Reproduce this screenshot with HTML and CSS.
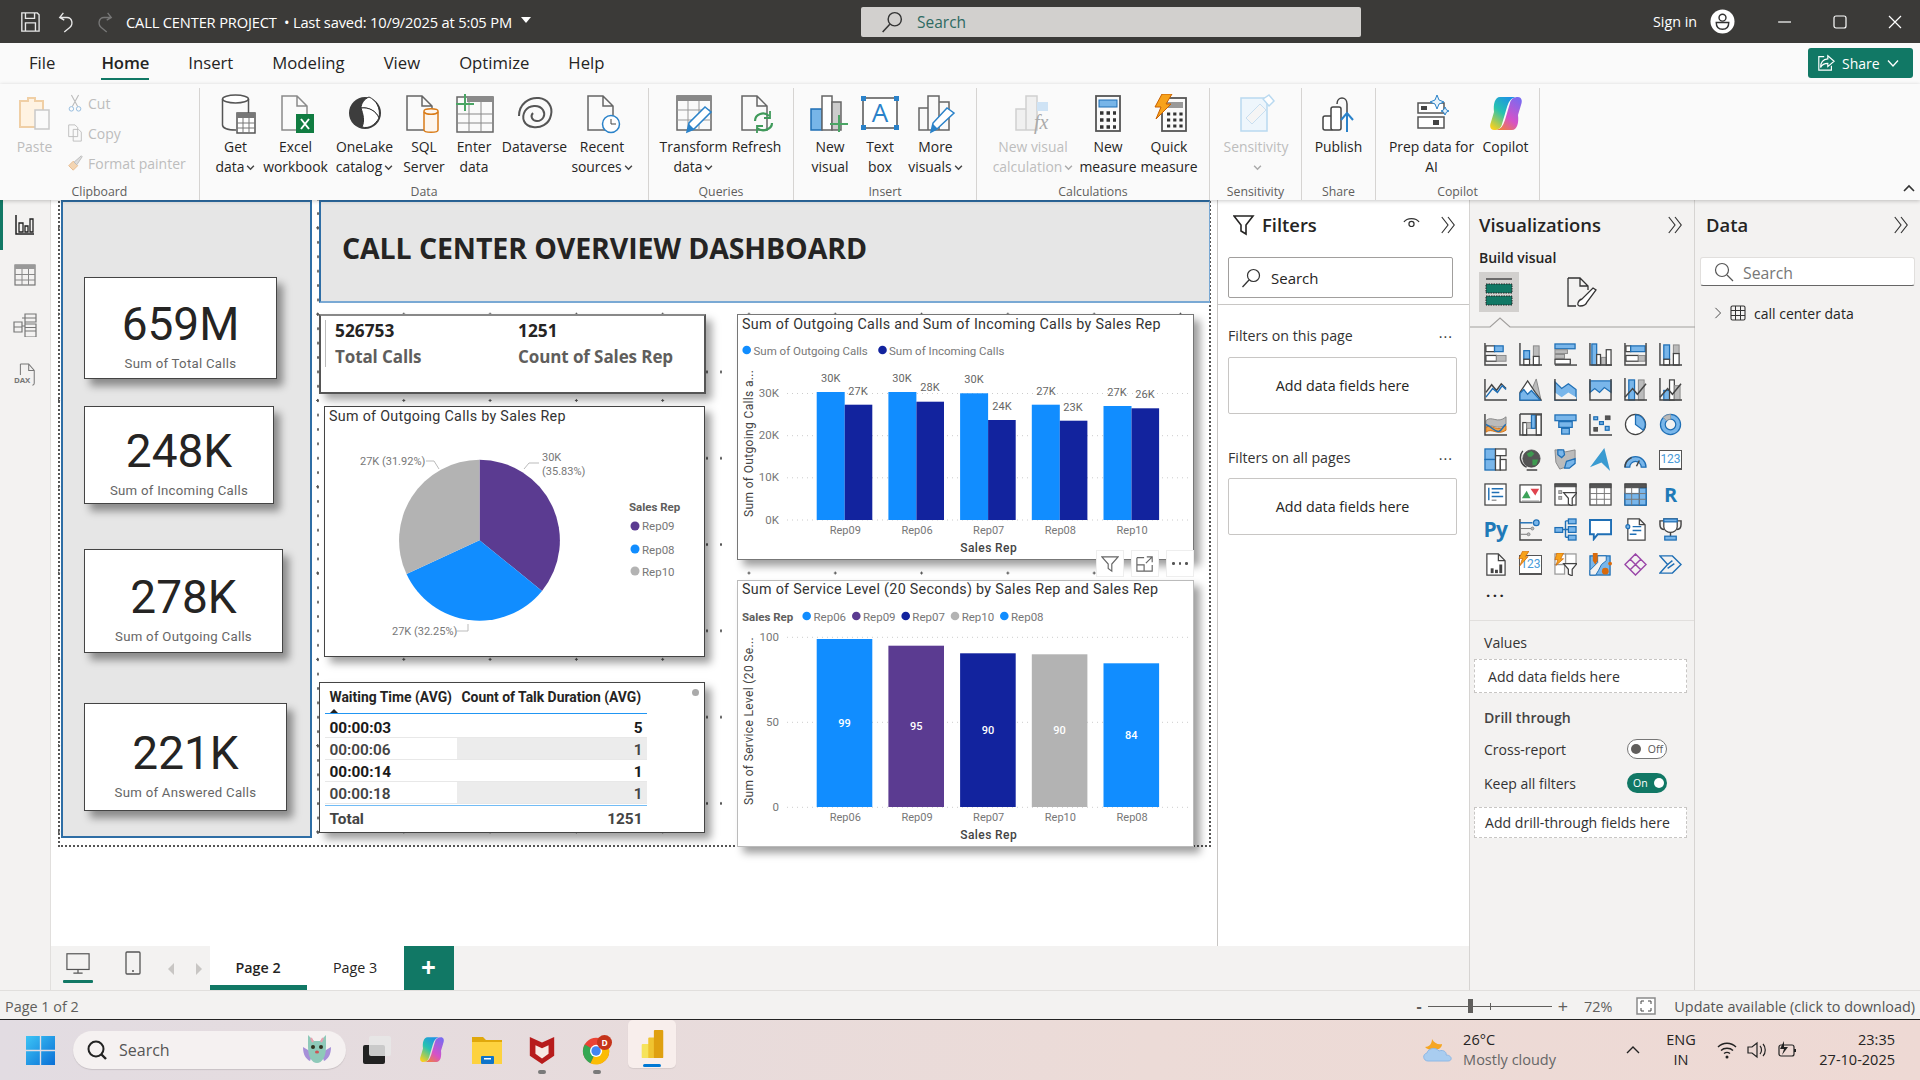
FILE: index.html
```html
<!DOCTYPE html>
<html lang="en">
<head>
<meta charset="utf-8">
<title>CALL CENTER PROJECT</title>
<link rel="stylesheet" href="styles.css">
</head>
<body>
<div class="app">
  <header class="titlebar">
    <div class="tb-left">
      <svg class="tb-ic" viewBox="0 0 22 24"><path d="M2 2H19L21 4V22H2Z M6 2V8H16V2 M6 22V13H17V22" fill="none" stroke="#e8e8e8" stroke-width="1.5"/></svg>
      <svg class="tb-ic" viewBox="0 0 22 24"><path d="M7 2L3 7L8 10M3 7H11C17 7 18 15 14 18L8 23" fill="none" stroke="#e8e8e8" stroke-width="1.5"/></svg>
      <svg class="tb-ic" viewBox="0 0 22 24"><path d="M15 2L19 7L14 10M19 7H11C5 7 4 15 8 18L14 23" fill="none" stroke="#777" stroke-width="1.5"/></svg>
      <span class="doc-title">CALL CENTER PROJECT&nbsp; •&nbsp;Last saved: 10/9/2025 at 5:05 PM</span>
      <span class="caret"></span>
    </div>
    <div class="tb-search">
      <svg class="ic22" viewBox="0 0 20 20"><circle cx="12.5" cy="7.5" r="6" fill="none" stroke="#333" stroke-width="1.3"/><path d="M8 12L1.5 19" stroke="#333" stroke-width="1.4"/></svg>
      <span>Search</span>
    </div>
    <div class="tb-right">
      <span class="signin">Sign in</span>
      <svg class="avatar" viewBox="0 0 26 26"><circle cx="13" cy="13" r="12.5" fill="#fff"/><circle cx="13" cy="9" r="3.6" fill="none" stroke="#333" stroke-width="1.5"/><path d="M6.5 14H19.5C19.5 19 16.5 21 13 21S6.5 19 6.5 14Z" fill="none" stroke="#333" stroke-width="1.5"/></svg>
      <div class="win-btns">
        <svg class="ic14" viewBox="0 0 14 14"><path d="M0 7H13" stroke="#fff" stroke-width="1.2"/></svg>
        <svg class="ic14" viewBox="0 0 14 14"><rect x="1" y="1" width="12" height="12" rx="2" fill="none" stroke="#fff" stroke-width="1.2"/></svg>
        <svg class="ic14" viewBox="0 0 14 14"><path d="M1 1L13 13M13 1L1 13" stroke="#fff" stroke-width="1.2"/></svg>
      </div>
    </div>
  </header>

  <nav class="tabs">
    <span class="tab tab-file">File</span>
    <span class="tab tab-on">Home</span>
    <span class="tab">Insert</span>
    <span class="tab">Modeling</span>
    <span class="tab">View</span>
    <span class="tab">Optimize</span>
    <span class="tab">Help</span>
    <button class="share">
      <svg class="ic18" viewBox="0 0 20 20"><path d="M12 2L19 8L12 14V10.5C8 10.5 5.5 12 4 15C4 9.5 7 6 12 5.5Z M8 3H2V18H16V13" fill="none" stroke="#fff" stroke-width="1.3"/></svg>
      <span>Share</span>
      <svg class="ic12" viewBox="0 0 12 12"><path d="M1 3.5L6 9L11 3.5" fill="none" stroke="#fff" stroke-width="1.3"/></svg>
    </button>
  </nav>

  <section class="ribbon">
    <div class="group g-clip">
      <div class="items">
        <div class="btn off">
          <svg class="ric" viewBox="0 0 40 40"><path d="M5 7H13V4H20V7H28V33H5Z" fill="#fff3e2" stroke="#f0cfa5" stroke-width="2"/><rect x="20" y="16" width="14" height="19" fill="#fafafa" stroke="#c9c9c9" stroke-width="1.5"/></svg>
          <span>Paste</span>
        </div>
        <div class="clip-stack off">
          <div class="mini"><svg class="ic18" viewBox="0 0 18 20"><path d="M5 1L12 14M13 1L6 14" stroke="#bbb" stroke-width="1.2"/><circle cx="5" cy="16.5" r="2.5" fill="none" stroke="#8fb8dc"/><circle cx="13" cy="16.5" r="2.5" fill="none" stroke="#8fb8dc"/></svg><span>Cut</span></div>
          <div class="mini"><svg class="ic18" viewBox="0 0 18 20"><path d="M2 1H9L12 4V14H2Z M7 6H13L16 9V19H7Z" fill="#fafafa" stroke="#bbb"/></svg><span>Copy</span></div>
          <div class="mini"><svg class="ic18" viewBox="0 0 18 20"><path d="M2 13L7 18L12 13L7 8Z" fill="#f3d5b3" stroke="#e6b98a"/><path d="M8 9L16 2L17 3L11 12Z" fill="#ddd" stroke="#bbb"/></svg><span>Format painter</span></div>
        </div>
      </div>
      <div class="g-label">Clipboard</div>
    </div>

    <div class="group g-data">
      <div class="items">
        <div class="btn">
          <svg class="ric" viewBox="0 0 40 40"><ellipse cx="19.5" cy="5" rx="13" ry="4" fill="#fff" stroke="#555" stroke-width="1.5"/><path d="M6.5 5V31C6.5 34 12 36 20 36M32.5 5V19" fill="none" stroke="#555" stroke-width="1.5"/><rect x="21" y="19" width="18" height="20" fill="#fff" stroke="#555" stroke-width="1.5"/><rect x="21" y="19" width="18" height="5" fill="#777"/><path d="M27 24V39M33 24V39M21 29H39M21 34H39" stroke="#777"/></svg>
          <span>Get<br>data<svg class="chev" viewBox="0 0 8 8"><path d="M1 2.5L4 5.5L7 2.5" fill="none" stroke="#444" stroke-width="1.3"/></svg></span>
        </div>
        <div class="btn">
          <svg class="ric" viewBox="0 0 40 40"><path d="M6 2H21L31 12V36H6Z M21 2V12H31" fill="#fafafa" stroke="#8a8a8a" stroke-width="1.5"/><rect x="20" y="20" width="18" height="19" fill="#107c41"/><path d="M25 25L33 35M33 25L25 35" stroke="#fff" stroke-width="2"/></svg>
          <span>Excel<br>workbook</span>
        </div>
        <div class="btn">
          <svg class="ric" viewBox="0 0 40 40"><circle cx="20" cy="19" r="16" fill="#3d3d3d"/><path d="M24 3C31 6 36 14 34 24C31 17 24 13 16 14C16 10 19 5 24 3Z" fill="#fff" stroke="#333"/><path d="M34 24C30 31 24 35 17 33C20 27 18 20 16 14C24 13 31 17 34 24Z" fill="#fff" stroke="#333"/></svg>
          <span>OneLake<br>catalog<svg class="chev" viewBox="0 0 8 8"><path d="M1 2.5L4 5.5L7 2.5" fill="none" stroke="#444" stroke-width="1.3"/></svg></span>
        </div>
        <div class="btn">
          <svg class="ric" viewBox="0 0 40 40"><path d="M3 2H18L28 12V36H3Z M18 2V12H28" fill="#fafafa" stroke="#666" stroke-width="1.5"/><path d="M20 17C20 14 34 14 34 17V36C34 39 20 39 20 36Z" fill="#fdf6ee" stroke="#d97b17" stroke-width="1.5"/><path d="M20 18C22 21 32 21 34 18" fill="none" stroke="#d97b17" stroke-width="1.5"/></svg>
          <span>SQL<br>Server</span>
        </div>
        <div class="btn">
          <svg class="ric" viewBox="0 0 40 40"><rect x="3" y="3" width="36" height="35" fill="#fafafa" stroke="#666" stroke-width="1.5"/><rect x="13" y="3" width="26" height="5" fill="#8a8a8a"/><path d="M15 8V38M27 8V38M3 20H39M3 29H39" stroke="#888"/><path d="M11 0V17M2 10H20" stroke="#4aa564" stroke-width="2"/></svg>
          <span>Enter<br>data</span>
        </div>
        <div class="btn">
          <svg class="ric" viewBox="0 0 40 40"><path d="M4 22C4 10 14 3 24 4C33 5 38 13 36 21C34 31 25 34 18 33C9 32 6 24 10 17C14 11 24 10 28 16C31 21 28 27 22 27C17 27 15 22 18 19" fill="none" stroke="#555" stroke-width="2"/></svg>
          <span>Dataverse</span>
        </div>
        <div class="btn">
          <svg class="ric" viewBox="0 0 40 40"><path d="M6 2H21L31 12V36H6Z M21 2V12H31" fill="#fafafa" stroke="#666" stroke-width="1.5"/><circle cx="29" cy="30" r="8.5" fill="#fff" stroke="#2a82c9" stroke-width="1.5"/><path d="M29 25V30H34" fill="none" stroke="#444"/></svg>
          <span>Recent<br>sources<svg class="chev" viewBox="0 0 8 8"><path d="M1 2.5L4 5.5L7 2.5" fill="none" stroke="#444" stroke-width="1.3"/></svg></span>
        </div>
      </div>
      <div class="g-label">Data</div>
    </div>

    <div class="group g-query">
      <div class="items">
        <div class="btn">
          <svg class="ric" viewBox="0 0 40 40"><rect x="3" y="2" width="34" height="34" fill="#fafafa" stroke="#666" stroke-width="1.5"/><rect x="3" y="2" width="34" height="5" fill="#888"/><path d="M14 7V36M25 7V36M3 16H37M3 26H37" stroke="#999"/><path d="M13 38L15 29L31 13L37 18L20 35Z" fill="#fff" stroke="#2a82c9" stroke-width="1.5"/><path d="M13 38L15 30L20 35Z" fill="#2a82c9"/></svg>
          <span>Transform<br>data<svg class="chev" viewBox="0 0 8 8"><path d="M1 2.5L4 5.5L7 2.5" fill="none" stroke="#444" stroke-width="1.3"/></svg></span>
        </div>
        <div class="btn">
          <svg class="ric" viewBox="0 0 40 40"><path d="M5 2H20L30 12V36H5Z M20 2V12H30" fill="#fafafa" stroke="#666" stroke-width="1.5"/><path d="M18 27C18 20 27 17 32 22M35 29C35 35 26 39 20 34" fill="none" stroke="#3f9a5a" stroke-width="2.2"/><path d="M33 17V24H27M20 39V32H26" fill="none" stroke="#3f9a5a" stroke-width="1.8"/></svg>
          <span>Refresh</span>
        </div>
      </div>
      <div class="g-label">Queries</div>
    </div>

    <div class="group g-insert">
      <div class="items">
        <div class="btn">
          <svg class="ric" viewBox="0 0 40 40"><rect x="1" y="15" width="11" height="21" fill="#77b5e8" stroke="#1f6fb5" stroke-width="1.5"/><rect x="12" y="2" width="10" height="34" fill="#fff" stroke="#666" stroke-width="1.5"/><rect x="22" y="8" width="9" height="28" fill="#ccc" stroke="#666" stroke-width="1.5"/><path d="M29 21V38M20 30H38" stroke="#4aa564" stroke-width="2"/></svg>
          <span>New<br>visual</span>
        </div>
        <div class="btn">
          <svg class="ric" viewBox="0 0 40 40"><rect x="3" y="4" width="34" height="30" fill="#fff" stroke="#555" stroke-width="1.5"/><rect x="1" y="2" width="5" height="5" fill="#2a82c9"/><rect x="34" y="2" width="5" height="5" fill="#2a82c9"/><rect x="1" y="31" width="5" height="5" fill="#2a82c9"/><rect x="34" y="31" width="5" height="5" fill="#2a82c9"/><text x="20" y="28" class="ic-a">A</text></svg>
          <span>Text<br>box</span>
        </div>
        <div class="btn">
          <svg class="ric" viewBox="0 0 40 40"><path d="M3 14H12V36H3Z M12 2H23V36H12Z M23 8H33V36H23Z" fill="#fafafa" stroke="#666" stroke-width="1.5"/><path d="M15 38L17 29L31 14L38 19L21 35Z" fill="#fff" stroke="#2a82c9" stroke-width="1.5"/><path d="M15 38L17 30L22 35Z" fill="#2a82c9"/></svg>
          <span>More<br>visuals<svg class="chev" viewBox="0 0 8 8"><path d="M1 2.5L4 5.5L7 2.5" fill="none" stroke="#444" stroke-width="1.3"/></svg></span>
        </div>
      </div>
      <div class="g-label">Insert</div>
    </div>

    <div class="group g-calc">
      <div class="items">
        <div class="btn off">
          <svg class="ric" viewBox="0 0 40 40"><path d="M3 15H13V36H3Z M13 2H24V36H13Z" fill="#f0f0f0" stroke="#d0d0d0" stroke-width="1.5"/><rect x="24" y="8" width="11" height="9" fill="#cfe3f5"/><text x="21" y="35" class="ic-fx">fx</text></svg>
          <span>New visual<br>calculation<svg class="chev" viewBox="0 0 8 8"><path d="M1 2.5L4 5.5L7 2.5" fill="none" stroke="#aaa" stroke-width="1.3"/></svg></span>
        </div>
        <div class="btn">
          <svg class="ric" viewBox="0 0 40 40"><rect x="8" y="2" width="24" height="35" fill="#fafafa" stroke="#555" stroke-width="1.8"/><rect x="11" y="6" width="18" height="7" fill="#77b5e8" stroke="#1f6fb5"/><path d="M12 19H28M12 26H28M12 33H28" stroke="#333" stroke-width="3.5" stroke-dasharray="3.5 3"/></svg>
          <span>New<br>measure</span>
        </div>
        <div class="btn">
          <svg class="ric" viewBox="0 0 40 40"><rect x="13" y="4" width="24" height="33" fill="#fafafa" stroke="#555" stroke-width="1.8"/><rect x="16" y="8" width="18" height="6" fill="#999"/><path d="M18 20H34M18 26H34M18 32H34" stroke="#333" stroke-width="3.2" stroke-dasharray="3.2 3"/><path d="M13 0H23L17 10H22L7 25L12 13H6Z" fill="#f7a21b" stroke="#c85f00"/></svg>
          <span>Quick<br>measure</span>
        </div>
      </div>
      <div class="g-label">Calculations</div>
    </div>

    <div class="group g-sens">
      <div class="items">
        <div class="btn off">
          <svg class="ric" viewBox="0 0 40 40"><rect x="5" y="4" width="26" height="33" fill="#eef6fc" stroke="#b9d9f0" stroke-width="1.5"/><path d="M10 24L24 10L30 16L16 30Z" fill="#f5f5f5" stroke="#c9dff0"/><path d="M27 5L33 1L38 7L33 12Z" fill="#fff" stroke="#b9d9f0" stroke-width="1.5"/></svg>
          <span>Sensitivity<br><svg class="chev" viewBox="0 0 8 8"><path d="M1 2.5L4 5.5L7 2.5" fill="none" stroke="#aaa" stroke-width="1.3"/></svg></span>
        </div>
      </div>
      <div class="g-label">Sensitivity</div>
    </div>

    <div class="group g-share">
      <div class="items">
        <div class="btn">
          <svg class="ric" viewBox="0 0 40 40"><path d="M18 10C18 2 28 2 28 10V24" fill="none" stroke="#444" stroke-width="1.5"/><rect x="4" y="22" width="10" height="14" rx="2" fill="#fff" stroke="#444" stroke-width="1.5"/><rect x="12" y="13" width="10" height="23" rx="2" fill="#fff" stroke="#444" stroke-width="1.5"/><path d="M28 38V20M22 26L28 19L34 26" fill="none" stroke="#2a82c9" stroke-width="2"/></svg>
          <span>Publish</span>
        </div>
      </div>
      <div class="g-label">Share</div>
    </div>

    <div class="group g-copilot">
      <div class="items">
        <div class="btn">
          <svg class="ric" viewBox="0 0 40 40"><rect x="6" y="9" width="26" height="10" fill="#fff" stroke="#555" stroke-width="1.5"/><rect x="6" y="23" width="26" height="11" fill="#fff" stroke="#555" stroke-width="1.5"/><rect x="9" y="12" width="6" height="4" fill="#444"/><rect x="21" y="26" width="6" height="5" fill="#444"/><path d="M25 1L27 6L32 8L27 10L25 15L23 10L18 8L23 6Z" fill="#e8f3fb" stroke="#2a82c9"/><path d="M33 13L34.5 16L37 17L34.5 18L33 21L31.5 18L29 17L31.5 16Z" fill="#e8f3fb" stroke="#2a82c9"/></svg>
          <span>Prep data for<br>AI</span>
        </div>
        <div class="btn">
          <svg class="ric" viewBox="0 0 40 40"><defs><linearGradient id="cpA" x1="0.8" y1="0" x2="0.2" y2="1"><stop offset="0" stop-color="#1d8fe8"/><stop offset=".5" stop-color="#27c3b0"/><stop offset="1" stop-color="#f5d020"/></linearGradient><linearGradient id="cpB" x1="0.8" y1="0" x2="0.2" y2="1"><stop offset="0" stop-color="#7a6af0"/><stop offset=".6" stop-color="#d552c8"/><stop offset="1" stop-color="#f08040"/></linearGradient></defs><path fill="url(#cpA)" d="M14 3h16c-5 1-7 4-9 10l-5 17c-1 4-4 6-8 6-3 0-5-3-3-8l3-10C7 10 9 3 14 3Z"/><path fill="url(#cpB)" d="M26 36H10c5-1 7-4 9-10l5-17c1-4 4-6 8-6 3 0 5 3 3 8l-3 10C33 29 31 36 26 36Z"/></svg>
          <span>Copilot</span>
        </div>
      </div>
      <div class="g-label">Copilot</div>
    </div>
    <svg class="collapse" viewBox="0 0 12 8"><path d="M1 7L6 2L11 7" fill="none" stroke="#333" stroke-width="1.6"/></svg>
  </section>

  <main class="main">
    <aside class="rail">
      <div class="rail-item rail-on"><svg class="ic24" viewBox="0 0 24 24"><path d="M3 2V21H21" fill="none" stroke="#222" stroke-width="1.5"/><path d="M6 10H10V19H6Z M12 13H15V19H12Z M17 6H20V19H17Z" fill="none" stroke="#222" stroke-width="1.3"/></svg></div>
      <div class="rail-item"><svg class="ic24" viewBox="0 0 24 24"><rect x="2" y="2" width="20" height="20" fill="none" stroke="#777" stroke-width="1.2"/><rect x="2" y="2" width="20" height="4" fill="#999"/><path d="M9 6V22M15.5 6V22M2 11.5H22M2 17H22" stroke="#888"/></svg></div>
      <div class="rail-item"><svg class="ic24" viewBox="0 0 24 24"><path d="M1 9H9V19H1Z M12 1H23V9H12Z M12 11H23V18H12Z M12 18H23V24H12Z M1 14H9M12 5H23M12 14.5H23M9 13H12M9 5H12V21" fill="none" stroke="#777" stroke-width="1.2"/></svg></div>
      <div class="rail-item"><svg class="ic24" viewBox="0 0 24 26"><path d="M7 1H16L22 8V22C22 23 21 24 20 24M7 13V1M16 1V8H22" fill="none" stroke="#777" stroke-width="1.1"/><text x="0" y="22" class="ic-dax">DAX</text></svg></div>
    </aside>

    <div class="workspace">
      <section class="canvas">
        <div class="page-edge"></div>

        <div class="side-panel"></div>
        <div class="kpi kpi-1"><div class="kpi-val">659M</div><div class="kpi-lab">Sum of Total Calls</div></div>
        <div class="kpi kpi-2"><div class="kpi-val">248K</div><div class="kpi-lab">Sum of Incoming Calls</div></div>
        <div class="kpi kpi-3"><div class="kpi-val">278K</div><div class="kpi-lab">Sum of Outgoing Calls</div></div>
        <div class="kpi kpi-4"><div class="kpi-val">221K</div><div class="kpi-lab">Sum of Answered Calls</div></div>

        <div class="banner"><h1>CALL CENTER OVERVIEW DASHBOARD</h1></div>

        <div class="multi">
          <div class="multi-col"><div class="m-num">526753</div><div class="m-lab">Total Calls</div></div>
          <div class="multi-col"><div class="m-num">1251</div><div class="m-lab">Count of Sales Rep</div></div>
        </div>

        <div class="visual v-pie">
          <svg class="chart" viewBox="324 406 381 251">
            <text x="329" y="421" class="c-title">Sum of Outgoing Calls by Sales Rep</text>
            <g transform="translate(479.5 540.3)">
              <path d="M0 0V-80.5A80.5 80.5 0 0 1 62.5 50.6Z" fill="#5b3b91"/>
              <path d="M0 0L62.5 50.6A80.5 80.5 0 0 1 -73 33.8Z" fill="#118dff"/>
              <path d="M0 0L-73 33.8A80.5 80.5 0 0 1 0 -80.5Z" fill="#b3b3b3"/>
            </g>
            <path d="M524 469L529 463H539M426 461H434L439 469M457 631H468V624" fill="none" stroke="#bbb"/>
            <text x="542" y="461" class="c-lab">30K</text>
            <text x="542" y="475" class="c-lab">(35.83%)</text>
            <text x="360" y="465" class="c-lab">27K (31.92%)</text>
            <text x="392" y="635" class="c-lab">27K (32.25%)</text>
            <text x="629" y="511" class="c-legh">Sales Rep</text>
            <circle cx="635" cy="526" r="4.5" fill="#5b3b91"/><text x="642" y="530" class="c-leg">Rep09</text>
            <circle cx="635" cy="549" r="4.5" fill="#118dff"/><text x="642" y="554" class="c-leg">Rep08</text>
            <circle cx="635" cy="571" r="4.5" fill="#b3b3b3"/><text x="642" y="576" class="c-leg">Rep10</text>
          </svg>
        </div>

        <div class="visual v-table">
          <div class="tbl">
            <div class="th">Waiting Time (AVG)</div><div class="th">Count of Talk Duration (AVG)</div>
            <div class="td b">00:00:03</div><div class="td b num">5</div>
            <div class="td">00:00:06</div><div class="td num shade">1</div>
            <div class="td b">00:00:14</div><div class="td b num">1</div>
            <div class="td">00:00:18</div><div class="td num shade">1</div>
            <div class="tf">Total</div><div class="tf num">1251</div>
          </div>
          <span class="sort"></span>
          <span class="tdot"></span>
        </div>

        <div class="visual v-bar1">
          <svg class="chart" viewBox="737 314 457 246">
            <text x="742" y="328.500" class="c-title">Sum of Outgoing Calls and Sum of Incoming Calls by Sales Rep</text>
            <circle cx="746.7" cy="350" r="4.3" fill="#118dff"/><text x="753.5" y="355" class="c-leg">Sum of Outgoing Calls</text>
            <circle cx="882.5" cy="350" r="4.3" fill="#12239e"/><text x="889" y="355" class="c-leg">Sum of Incoming Calls</text>
            <path d="M787 393.5H1189M787 435.7H1189M787 477.8H1189M787 520H1189" stroke="#ccc" stroke-dasharray="1 4"/>
            <text x="779" y="397" class="c-tick ta-e">30K</text><text x="779" y="439" class="c-tick ta-e">20K</text><text x="779" y="481" class="c-tick ta-e">10K</text><text x="779" y="524" class="c-tick ta-e">0K</text>
            <text transform="translate(753 517) rotate(-90)" class="c-ax">Sum of Outgoing Calls a...</text>
            <g fill="#118dff">
              <rect x="816.7" y="392" width="28" height="128"/><rect x="888.4" y="392" width="28" height="128"/><rect x="960.1" y="393.3" width="28" height="126.7"/><rect x="1031.8" y="404.7" width="28" height="115.3"/><rect x="1103.5" y="406" width="28" height="114"/>
            </g>
            <g fill="#12239e">
              <rect x="844.7" y="404.7" width="27.6" height="115.3"/><rect x="916.4" y="401.7" width="27.6" height="118.3"/><rect x="988.1" y="420" width="27.6" height="100"/><rect x="1059.8" y="420.7" width="27.6" height="99.3"/><rect x="1131.5" y="408.3" width="27.6" height="111.7"/>
            </g>
            <g class="c-val">
              <text x="830.7" y="382">30K</text><text x="902" y="382">30K</text><text x="974" y="383">30K</text><text x="1046" y="395">27K</text><text x="1117" y="396">27K</text>
              <text x="858" y="395">27K</text><text x="930" y="391">28K</text><text x="1002" y="410">24K</text><text x="1073" y="411">23K</text><text x="1145" y="398">26K</text>
            </g>
            <g class="c-cat">
              <text x="845.3" y="534">Rep09</text><text x="917" y="534">Rep06</text><text x="988.7" y="534">Rep07</text><text x="1060.4" y="534">Rep08</text><text x="1132.1" y="534">Rep10</text>
            </g>
            <text x="988.7" y="552" class="c-axt">Sales Rep</text>
          </svg>
        </div>

        <div class="visual v-bar2">
          <svg class="chart" viewBox="737 580 457 267">
            <text x="742" y="594" class="c-title">Sum of Service Level (20 Seconds) by Sales Rep and Sales Rep</text>
            <text x="742" y="621" class="c-legh">Sales Rep</text>
            <circle cx="806.7" cy="616" r="4.3" fill="#118dff"/><text x="813.5" y="621" class="c-leg">Rep06</text>
            <circle cx="856.3" cy="616" r="4.3" fill="#5b3b91"/><text x="863" y="621" class="c-leg">Rep09</text>
            <circle cx="905.7" cy="616" r="4.3" fill="#12239e"/><text x="912.3" y="621" class="c-leg">Rep07</text>
            <circle cx="955" cy="616" r="4.3" fill="#b3b3b3"/><text x="961.7" y="621" class="c-leg">Rep10</text>
            <circle cx="1004.3" cy="616" r="4.3" fill="#118dff"/><text x="1011" y="621" class="c-leg">Rep08</text>
            <path d="M787 637.3H1189M787 722.3H1189M787 807.3H1189" stroke="#ccc" stroke-dasharray="1 4"/>
            <text x="779" y="641" class="c-tick ta-e">100</text><text x="779" y="726" class="c-tick ta-e">50</text><text x="779" y="811" class="c-tick ta-e">0</text>
            <text transform="translate(753 805) rotate(-90)" class="c-ax">Sum of Service Level (20 Se...</text>
            <rect x="816.7" y="639" width="55.6" height="168" fill="#118dff"/>
            <rect x="888.4" y="645.7" width="55.6" height="161.3" fill="#5b3b91"/>
            <rect x="960.1" y="653.3" width="55.6" height="153.7" fill="#12239e"/>
            <rect x="1031.8" y="654.3" width="55.6" height="152.7" fill="#b3b3b3"/>
            <rect x="1103.5" y="663.3" width="55.6" height="143.7" fill="#118dff"/>
            <g class="c-wval">
              <text x="844.5" y="727">99</text><text x="916.2" y="730">95</text><text x="987.9" y="734">90</text><text x="1059.6" y="734">90</text><text x="1131.3" y="739">84</text>
            </g>
            <g class="c-cat">
              <text x="845.3" y="821">Rep06</text><text x="917" y="821">Rep09</text><text x="988.7" y="821">Rep07</text><text x="1060.4" y="821">Rep10</text><text x="1132.1" y="821">Rep08</text>
            </g>
            <text x="988.7" y="839" class="c-axt">Sales Rep</text>
          </svg>
        </div>

        <div class="actions">
          <div class="act"><svg class="ic18" viewBox="0 0 20 20"><path d="M1 2H19L12 10V18L8 15V10Z" fill="none" stroke="#666" stroke-width="1.3"/></svg></div>
          <div class="act"><svg class="ic18" viewBox="0 0 20 20"><path d="M1 3H9M1 3V18H18V11M1 11H9V18M12 2H18V8M18 2L11 9" fill="none" stroke="#666" stroke-width="1.3"/></svg></div>
          <div class="act"><span class="dots3"><i></i><i></i><i></i></span></div>
        </div>
      </section>

      <aside class="filters">
        <div class="f-head">
          <svg class="ic22" viewBox="0 0 22 22"><path d="M1 2H20L13 11V20L8 17V11Z" fill="none" stroke="#252423" stroke-width="1.6"/></svg>
          <span class="pane-title">Filters</span>
          <svg class="f-eye" viewBox="0 0 18 16"><path d="M1 7C4 2 14 2 17 7" fill="none" stroke="#333" stroke-width="1.3"/><circle cx="9" cy="9" r="2.7" fill="none" stroke="#333" stroke-width="1.3"/></svg>
          <svg class="dbl" viewBox="0 0 18 20"><path d="M2 1L9 10L2 19M9 1L16 10L9 19" fill="none" stroke="#333" stroke-width="1.3"/></svg>
        </div>
        <div class="f-search">
          <svg class="ic20" viewBox="0 0 20 20"><circle cx="12.5" cy="7.5" r="6" fill="none" stroke="#333" stroke-width="1.2"/><path d="M8 12L1.5 19" stroke="#333" stroke-width="1.3"/></svg>
          <span>Search</span>
        </div>
        <div class="f-rule"></div>
        <div class="f-row f-row-1"><span>Filters on this page</span><span class="more">...</span></div>
        <div class="f-box">Add data fields here</div>
        <div class="f-row f-row-2"><span>Filters on all pages</span><span class="more">...</span></div>
        <div class="f-box">Add data fields here</div>
      </aside>

      <div class="pagebar">
        <div class="view-btn view-on"><svg class="ic24" viewBox="0 0 26 24"><rect x="1" y="2" width="24" height="17" fill="none" stroke="#555" stroke-width="1.3"/><path d="M13 19V23M8 23H18" stroke="#555" stroke-width="1.3"/></svg></div>
        <div class="view-btn"><svg class="ic24" viewBox="0 0 16 24"><rect x="1" y="1" width="14" height="22" rx="1" fill="none" stroke="#555" stroke-width="1.3"/><circle cx="8" cy="20" r="1" fill="#555"/></svg></div>
        <span class="arr arr-l"></span><span class="arr arr-r"></span>
        <div class="page-tab page-on">Page 2</div>
        <div class="page-tab">Page 3</div>
        <div class="page-add">+</div>
      </div>
    </div>

    <aside class="vis">
      <div class="pane-head"><span class="pane-title">Visualizations</span><svg class="dbl" viewBox="0 0 18 20"><path d="M2 1L9 10L2 19M9 1L16 10L9 19" fill="none" stroke="#333" stroke-width="1.3"/></svg></div>
      <div class="build">Build visual</div>
      <div class="build-tabs">
        <div class="build-on"><svg class="ic30" viewBox="0 0 30 30"><path d="M2 2H28" stroke="#333" stroke-width="1.3"/><rect x="2" y="7" width="26" height="9" fill="#117865" stroke="#222" stroke-dasharray="1.5 1"/><rect x="2" y="19" width="26" height="9" fill="#117865" stroke="#222" stroke-dasharray="1.5 1"/></svg></div>
        <svg class="fmt" viewBox="0 0 32 32"><path d="M3 2H15L23 10V14M3 2V30H11M15 2V10H23" fill="none" stroke="#333" stroke-width="1.3"/><path d="M15 30C11 30 13 24 17 23L28 12L31 14L22 26C21 29 18 30 15 30Z" fill="#fff" stroke="#333" stroke-width="1.3"/></svg>
      </div>
      <svg class="notch" viewBox="0 0 226 11"><path d="M0 10H20L30 1L40 10H226" fill="none" stroke="#a19f9d" stroke-width="1.2"/></svg>

      <div class="vgrid">
        <svg viewBox="0 0 24 24"><rect class="w" x="2" y="3" width="9" height="6"/><rect class="a" x="11" y="3" width="9" height="6"/><rect class="w" x="2" y="13" width="11" height="6"/><rect class="g" x="13" y="13" width="10" height="6"/><path class="k" d="M1 0V23H24"/></svg>
        <svg viewBox="0 0 24 24"><rect class="a" x="5" y="8" width="6" height="9"/><rect class="w" x="5" y="17" width="6" height="6"/><rect class="g" x="15" y="3" width="6" height="11"/><rect class="w" x="15" y="14" width="6" height="9"/><path class="k" d="M1 0V23H24"/></svg>
        <svg viewBox="0 0 24 24"><rect class="a" x="1" y="1" width="21" height="5"/><rect class="g" x="1" y="7" width="13" height="4"/><rect class="g" x="1" y="12" width="10" height="4"/><rect class="w" x="1" y="17" width="16" height="5"/><path class="k" d="M1 23H24"/></svg>
        <svg viewBox="0 0 24 24"><rect class="a" x="3" y="1" width="5" height="22"/><rect class="w" x="8" y="12" width="4" height="11"/><rect class="g" x="13" y="15" width="5" height="8"/><rect class="w" x="18" y="7" width="5" height="16"/><path class="k" d="M1 0V23H24"/></svg>
        <svg viewBox="0 0 24 24"><rect class="w" x="2" y="3" width="5" height="6"/><rect class="a" x="7" y="3" width="15" height="6"/><rect class="w" x="2" y="13" width="13" height="6"/><rect class="g" x="15" y="13" width="7" height="6"/><path class="k" d="M1 0V23H23V0"/></svg>
        <svg viewBox="0 0 24 24"><rect class="a" x="5" y="2" width="6" height="15"/><rect class="w" x="5" y="17" width="6" height="6"/><rect class="g" x="15" y="2" width="6" height="9"/><rect class="w" x="15" y="11" width="6" height="12"/><path class="k" d="M1 0V23H24"/></svg>

        <svg viewBox="0 0 24 24"><path class="k" d="M1 1V23H24"/><path class="k" d="M2 15L8 7L13 13L18 6L23 11"/><path class="l" d="M2 20L9 11L14 15L19 8L23 12"/></svg>
        <svg viewBox="0 0 24 24"><path class="g" d="M12 15L18 1L23 23H14Z"/><path class="w" d="M1 15L9 3L17 15L23 23H1Z"/><path class="a" d="M1 23V16L5 12L9 17L13 13L22 23Z"/></svg>
        <svg viewBox="0 0 24 24"><path class="a" d="M1 4L8 11L15 6L23 12V23H1Z"/><path class="w0" d="M1 15L8 20L15 15L23 20V23H1Z"/><path class="k" d="M1 1V23H24"/></svg>
        <svg viewBox="0 0 24 24"><path class="a" d="M1 3H23V15L16 10L11 15L6 11L1 15Z"/><path class="k" d="M1 1V23H23V1"/></svg>
        <svg viewBox="0 0 24 24"><rect class="a" x="5" y="2" width="6" height="21"/><rect class="g" x="15" y="2" width="6" height="21"/><path class="k" d="M1 0V23H24"/><path class="k" d="M1 20L9 11L14 17L23 6"/></svg>
        <svg viewBox="0 0 24 24"><rect class="a" x="5" y="13" width="6" height="10"/><rect class="w" x="11" y="2" width="5" height="21"/><rect class="g" x="16" y="8" width="6" height="15"/><path class="k" d="M1 0V23H24"/><path class="k" d="M1 20L9 11L14 17L23 6"/></svg>

        <svg viewBox="0 0 24 24"><path class="g" d="M2 8C8 2 14 12 23 4V12C14 19 8 10 2 15Z"/><path class="o" d="M2 15C8 11 14 21 23 13V18C14 24 8 15 2 20Z"/><path class="l" d="M2 12C8 14 12 21 16 19C19 18 21 12 23 12"/><path class="k" d="M1 1V23H24"/></svg>
        <svg viewBox="0 0 24 24"><rect class="w" x="4" y="10" width="4" height="13"/><rect class="g" x="8" y="10" width="5" height="6"/><rect class="a" x="13" y="2" width="4" height="14"/><rect class="w" x="18" y="2" width="5" height="21"/><path class="k" d="M1 1V23H24M1 1H24V23"/></svg>
        <svg viewBox="0 0 24 24"><rect class="a" x="1" y="2" width="22" height="6"/><rect class="a" x="5" y="9" width="14" height="6"/><rect class="a" x="8" y="16" width="8" height="6"/></svg>
        <svg viewBox="0 0 24 24"><path class="k" d="M1 1V23H24"/><rect class="d1" x="17" y="3" width="5" height="4"/><rect class="a" x="5" y="4" width="4" height="3"/><rect class="a" x="11" y="9" width="4" height="3"/><rect class="d1" x="5" y="15" width="4" height="4"/><rect class="a" x="17" y="14" width="4" height="4"/></svg>
        <svg viewBox="0 0 24 24"><circle class="w" cx="12" cy="12" r="10.5"/><path class="a" d="M12 2A10 10 0 0 1 20 18L12 12Z"/></svg>
        <svg viewBox="0 0 24 24"><circle class="a" cx="12" cy="12" r="10.5"/><circle class="w0b" cx="12" cy="12" r="5.5"/><path class="g0" d="M4.5 4.5A11 11 0 0 1 12 1.5V6.5A6 6 0 0 0 8 8Z"/></svg>

        <svg viewBox="0 0 24 24"><rect class="a" x="1" y="1" width="11" height="11"/><rect class="a" x="1" y="12" width="11" height="11"/><rect class="w" x="12" y="1" width="11" height="7"/><rect class="w" x="12" y="8" width="5" height="15"/><rect class="w" x="17" y="12" width="6" height="11"/></svg>
        <svg viewBox="0 0 24 24"><path class="k" d="M4 3A11 11 0 0 0 8 20M8 23H19"/><circle class="d1" cx="13" cy="11" r="9"/><path class="gr" d="M8 6L13 3L16 6L13 9L10 9ZM14 12H20L18 18L14 18Z"/></svg>
        <svg viewBox="0 0 24 24"><path class="g" d="M1 2H8L12 4L22 2V13L13 14L12 20L6 22L2 15Z"/><path class="a" d="M4 2H10L11 7L8 10L4 7ZM13 14L22 11V16L16 21H11Z"/></svg>
        <svg viewBox="0 0 24 24"><path class="az" d="M16 0L22 24L13 15L1 20Z"/></svg>
        <svg viewBox="0 0 24 24"><path class="a" d="M1 20A11 11 0 0 1 23 20H18A6 6 0 0 0 6 20Z"/><path class="k" d="M1 20A11 11 0 0 1 8 10"/><path class="k" d="M13 19L16 13"/></svg>
        <div class="vt-box"><span>123</span></div>

        <svg viewBox="0 0 24 24"><rect class="w" x="1" y="1" width="22" height="22"/><path class="l" d="M5 5V18"/><path class="l" d="M8 6H20M8 10H16M8 14H20"/><path class="g1" d="M8 18H13"/></svg>
        <svg viewBox="0 0 24 24"><rect class="w" x="1" y="2" width="22" height="18"/><path class="gf" d="M3 16L8 8L12 16Z"/><path class="rf" d="M12 6H21L17 13Z"/><path class="g1" d="M3 19H21"/></svg>
        <svg viewBox="0 0 24 24"><rect class="w" x="1" y="1" width="22" height="22"/><rect class="d1" x="1" y="1" width="22" height="3"/><rect class="g" x="5" y="8" width="3" height="3"/><rect class="g" x="5" y="14" width="3" height="3"/><path class="wf" d="M10 10H24L19 16V24L15 22V16Z"/></svg>
        <svg viewBox="0 0 24 24"><rect class="w" x="1" y="1" width="22" height="22"/><rect class="d1" x="1" y="1" width="22" height="4"/><path class="t" d="M8 5V23M16 5V23M1 11H23M1 17H23"/></svg>
        <svg viewBox="0 0 24 24"><rect class="w" x="1" y="1" width="22" height="22"/><rect class="a" x="1" y="11" width="22" height="12"/><rect class="a" x="16" y="5" width="7" height="18"/><rect class="d1" x="1" y="1" width="22" height="4"/><path class="t" d="M8 5V23M16 5V23M1 11H23M1 17H23"/></svg>
        <div class="vt vt-r">R</div>

        <div class="vt vt-py">Py</div>
        <svg viewBox="0 0 24 24"><path class="k" d="M1 1V23H24"/><path class="l" d="M1 5H14"/><circle class="a" cx="18" cy="5" r="3"/><path class="t" d="M1 11H13M1 17H9"/><circle class="g" cx="14" cy="11" r="1.5"/><circle class="g" cx="10" cy="17" r="1.5"/></svg>
        <svg viewBox="0 0 24 24"><rect class="a" x="1" y="10" width="8" height="5"/><rect class="a" x="15" y="1" width="8" height="5"/><rect class="a" x="15" y="9" width="8" height="6"/><rect class="a" x="15" y="18" width="8" height="5"/><path class="l" d="M9 12H15M12 3V20M12 3H15M12 20H15"/></svg>
        <svg viewBox="0 0 24 24"><path class="w2" d="M1 2H23V17H9L5 22V17H1Z"/></svg>
        <svg viewBox="0 0 24 24"><path class="w" d="M4 1H16L22 7V23H4Z M16 1V7H22"/><circle class="a" cx="4" cy="9" r="2"/><path class="l" d="M9 9H18M9 13H18M6 17H13"/></svg>
        <svg viewBox="0 0 24 24"><path class="k" d="M5 3H1V7C1 11 4 12 6 12M19 3H23V7C23 11 20 12 18 12M12 14V19"/><path class="w" d="M5 1H19V9C19 13 15 15 12 15C9 15 5 13 5 9Z"/><rect class="a" x="5" y="1" width="14" height="3"/><rect class="a" x="6" y="19" width="12" height="4"/></svg>

        <svg viewBox="0 0 24 24"><path class="w" d="M3 1H15L22 8V23H3Z M15 1V8H22"/><rect class="d2" x="7" y="16" width="3" height="5"/><rect class="d2" x="11.5" y="17.5" width="3" height="3.5"/><rect class="d2" x="16" y="12" width="3" height="9"/></svg>
        <div class="vt-box vt-q"><span>123</span><svg viewBox="0 0 12 16"><path d="M5 0H12L8 6H11L2 16L5 8H1Z" fill="#f7a21b" stroke="#c85f00" stroke-width=".7"/></svg></div>
        <svg viewBox="0 0 24 24"><rect class="w1" x="12" y="1" width="11" height="10"/><rect class="w1" x="1" y="12" width="10" height="10"/><rect class="w1" x="1" y="1" width="11" height="11"/><path class="ob" d="M3 0H10L7 6H10L2 13L4 7H1Z"/><path class="wf" d="M10 11H24L19 17V24L15 22V17Z"/></svg>
        <svg viewBox="0 0 24 24"><rect class="a" x="1" y="3" width="21" height="20"/><path class="wt" d="M9 3H18V8L13 12L10 18L7 23H1V18L9 10Z"/><path class="or" d="M4 0H9V8L6.5 12L4 8Z"/><circle class="or" cx="17" cy="19" r="3.5"/><circle class="or" cx="22" cy="11" r="2"/></svg>
        <svg viewBox="0 0 24 24"><path class="pa" d="M12 1L23 12L12 23L1 12Z M12 1L17.5 6.5L12 12L6.5 6.5Z M1 12L6.5 6.5 M6.5 17.5L12 12L17.5 17.5"/></svg>
        <svg viewBox="0 0 24 24"><path class="l" d="M1 3H14L23 12L14 21H1L9 12Z"/><path class="l" d="M9 12L14 8M9 16L16 11"/></svg>
      </div>
      <div class="v-more">...</div>
      <div class="v-sec">
        <div class="v-lab">Values</div>
        <div class="dash dash-1">Add data fields here</div>
        <div class="v-h">Drill through</div>
        <div class="v-tg"><span>Cross-report</span><span class="toggle off-t"><i></i><b>Off</b></span></div>
        <div class="v-tg"><span>Keep all filters</span><span class="toggle on-t"><b>On</b><i></i></span></div>
        <div class="dash dash-2">Add drill-through fields here</div>
      </div>
    </aside>

    <aside class="data">
      <div class="pane-head"><span class="pane-title">Data</span><svg class="dbl" viewBox="0 0 18 20"><path d="M2 1L9 10L2 19M9 1L16 10L9 19" fill="none" stroke="#333" stroke-width="1.3"/></svg></div>
      <div class="d-search">
        <svg class="ic20" viewBox="0 0 20 20"><circle cx="8" cy="8" r="6.5" fill="none" stroke="#555" stroke-width="1.2"/><path d="M13 13L19 19" stroke="#555" stroke-width="1.3"/></svg>
        <span>Search</span>
      </div>
      <div class="tree">
        <svg class="ic12" viewBox="0 0 12 14"><path d="M3 1L9 7L3 13" fill="none" stroke="#444" stroke-width="1.1"/></svg>
        <svg class="ic16" viewBox="0 0 16 16"><rect x="1" y="1" width="14" height="14" rx="1.5" fill="none" stroke="#333" stroke-width="1.1"/><path d="M1 5.5H15M1 10.5H15M5.5 1V15M10.5 1V15" stroke="#333" stroke-width="1"/></svg>
        <span>call center data</span>
      </div>
    </aside>
  </main>

  <footer class="status">
    <span>Page 1 of 2</span>
    <div class="status-r">
      <span class="z-minus">-</span>
      <span class="slider"><i class="s-thumb"></i><i class="s-tick"></i></span>
      <span class="z-plus">+</span>
      <span class="z-pct">72%</span>
      <svg class="fit" viewBox="0 0 20 18"><rect x="1" y="1" width="18" height="16" fill="#fff" stroke="#8a8a8a" stroke-width="1.5"/><path d="M5 7V4H8M12 4H15V7M15 11V14H12M8 14H5V11" fill="none" stroke="#444"/></svg>
      <span class="update">Update available (click to download)</span>
    </div>
  </footer>

  <div class="taskbar">
    <svg class="win" viewBox="0 0 30 30"><defs><linearGradient id="wn" x1="0" y1="0" x2="1" y2="1"><stop offset="0" stop-color="#3dc4f5"/><stop offset="1" stop-color="#0a6fd6"/></linearGradient></defs><path fill="url(#wn)" d="M0 0H14.3V14.3H0ZM15.7 0H30V14.3H15.7ZM0 15.7H14.3V30H0ZM15.7 15.7H30V30H15.7Z"/></svg>
    <div class="t-search">
      <svg class="ic22" viewBox="0 0 22 22"><circle cx="10" cy="10" r="7.5" fill="none" stroke="#222" stroke-width="2"/><path d="M15 15L20 20" stroke="#222" stroke-width="2.4"/></svg>
      <span>Search</span>
      <svg class="bat" viewBox="0 0 34 34"><path d="M3 14L13 20L10 28C6 26 3 22 3 14ZM31 14L21 20L24 28C28 26 31 22 31 14Z" fill="#a690d8"/><path d="M8 2L14 8H20L26 2L26 14C26 24 22 30 17 30S8 24 8 14Z" fill="#8ec9b9"/><circle cx="13" cy="14" r="2" fill="#332"/><circle cx="21" cy="14" r="2" fill="#332"/><path d="M11 5L13 9M23 5L21 9" stroke="#e8a0b0" stroke-width="2"/><ellipse cx="17" cy="19" rx="2" ry="1.5" fill="#c55"/></svg>
    </div>
    <div class="t-icons">
      <div class="t-ic"><svg class="ic30" viewBox="0 0 30 30"><rect x="1" y="10" width="22" height="19" rx="2" fill="#222"/><rect x="7" y="1" width="22" height="20" rx="2" fill="#e8e8e8" opacity=".85"/></svg></div>
      <div class="t-ic"><svg class="ic30" viewBox="0 0 40 40"><defs><linearGradient id="cpC" x1="0.8" y1="0" x2="0.2" y2="1"><stop offset="0" stop-color="#1d8fe8"/><stop offset=".5" stop-color="#27c3b0"/><stop offset="1" stop-color="#f5d020"/></linearGradient><linearGradient id="cpD" x1="0.8" y1="0" x2="0.2" y2="1"><stop offset="0" stop-color="#7a6af0"/><stop offset=".6" stop-color="#d552c8"/><stop offset="1" stop-color="#f08040"/></linearGradient></defs><path fill="url(#cpC)" d="M14 3h16c-5 1-7 4-9 10l-5 17c-1 4-4 6-8 6-3 0-5-3-3-8l3-10C7 10 9 3 14 3Z"/><path fill="url(#cpD)" d="M26 36H10c5-1 7-4 9-10l5-17c1-4 4-6 8-6 3 0 5 3 3 8l-3 10C33 29 31 36 26 36Z"/></svg></div>
      <div class="t-ic"><svg class="ic30" viewBox="0 0 30 30"><path d="M0 2H11L14 5H30V29H0Z" fill="#e0a80c"/><rect y="7" width="30" height="22" fill="#fdd23f"/><rect x="9" y="21" width="13" height="8" rx="1" fill="#0f74c9"/><rect x="12" y="23" width="7" height="1.5" fill="#fff"/></svg></div>
      <div class="t-ic t-dot"><svg class="ic30" viewBox="0 0 30 32"><path d="M2 2L15 8L28 2V22L15 31L2 22Z" fill="#b71c1c"/><path d="M8 11L15 14L22 11V20L15 25L8 20Z" fill="#f7e9e4"/></svg></div>
      <div class="t-ic t-dot"><svg class="ic30" viewBox="0 0 32 32"><circle cx="15" cy="17" r="14" fill="#ea4335"/><path d="M15 17L27 10A14 14 0 0 1 9 30Z" fill="#fbbc04"/><path d="M15 17L9 30A14 14 0 0 1 3 10Z" fill="#34a853"/><circle cx="15" cy="17" r="6.5" fill="#fff"/><circle cx="15" cy="17" r="5" fill="#4285f4"/><circle cx="24" cy="8" r="8" fill="#c5341b"/><text x="24" y="11.5" class="ic-d">D</text></svg></div>
      <div class="t-ic t-active"><svg class="ic30" viewBox="0 0 24 32"><rect x="1" y="16" width="10" height="15" rx="1" fill="#f6e35c"/><rect x="8" y="9" width="10" height="22" rx="1" fill="#f0c430"/><rect x="14" y="1" width="10" height="30" rx="1" fill="#dfa010"/></svg></div>
    </div>
    <div class="tray">
      <svg class="weather" viewBox="0 0 32 26"><path d="M10 2C12 6 16 8 20 7C20 12 14 14 8 13C5 12 3 10 3 10C7 10 10 7 10 2Z" fill="#f5a623"/><path d="M6 24C1 24 0 17 5 16C6 11 14 10 17 14C22 12 25 16 24 18C30 18 31 24 26 24Z" fill="#a9cdf0" stroke="#8db8e6"/></svg>
      <div class="weather-txt"><div>26°C</div><div class="w-sub">Mostly cloudy</div></div>
      <svg class="tray-up" viewBox="0 0 14 8"><path d="M1 7L7 1L13 7" fill="none" stroke="#222" stroke-width="1.4"/></svg>
      <div class="lang"><div>ENG</div><div>IN</div></div>
      <svg class="ic20" viewBox="0 0 20 20"><path d="M1 7C6 2 14 2 19 7M4 10.5C7 7.5 13 7.5 16 10.5M7 13.5C9 12 11 12 13 13.5" fill="none" stroke="#222" stroke-width="1.4"/><circle cx="10" cy="17" r="1.5" fill="#222"/></svg>
      <svg class="ic20" viewBox="0 0 20 20"><path d="M1 7H5L10 3V17L5 13H1Z M13 6C15 8 15 12 13 14M16 4C19 7 19 13 16 16" fill="none" stroke="#222" stroke-width="1.2"/></svg>
      <svg class="ic20" viewBox="0 0 20 20"><rect x="2" y="5" width="15" height="11" rx="2" fill="none" stroke="#222" stroke-width="1.2"/><rect x="17" y="9" width="2" height="3" fill="#222"/><path d="M7 1L3 9H7L5 15L11 7H7Z" fill="#222"/></svg>
      <div class="clock"><div>23:35</div><div>27-10-2025</div></div>
    </div>
  </div>
</div>
</body>
</html>
```

FILE: styles.css
```css
* { box-sizing: border-box; }
html, body { margin: 0; padding: 0; width: 1920px; height: 1080px; overflow: hidden; }
body { font-family: "Open Sans", "Noto Sans", sans-serif; color: #252423; background: #fff; }
svg { display: block; flex: none; }
.app { display: flex; flex-direction: column; width: 1920px; height: 1080px; }

.ic12 { width: 12px; height: 12px; }
.ic14 { width: 14px; height: 14px; }
.ic16 { width: 16px; height: 16px; }
.ic18 { width: 18px; height: 18px; }
.ic20 { width: 20px; height: 20px; }
.ic22 { width: 22px; height: 22px; }
.ic24 { width: 24px; height: 24px; }
.ic30 { width: 30px; height: 30px; }

/* title bar */
.titlebar { flex: 0 0 43px; display: flex; align-items: center; background: #3b3a38; color: #fff; }
.tb-left { width: 861px; display: flex; align-items: center; padding-left: 20px; }
.tb-ic { width: 20px; height: 22px; margin-right: 17px; }
.tb-ic:nth-child(3) { margin-right: 12px; }
.doc-title { font-size: 14.7px; letter-spacing: -.18px; white-space: nowrap; }
.caret { width: 0; height: 0; border-left: 5.5px solid transparent; border-right: 5.5px solid transparent; border-top: 6px solid #fff; margin-left: 9px; margin-top: -3px; }
.tb-search { width: 500px; height: 30px; background: #d2d0ce; border-radius: 2px; display: flex; align-items: center; padding-left: 20px; gap: 14px; color: #2e6a62; font-size: 15.5px; }
.tb-right { flex: 1; display: flex; align-items: center; padding-left: 292px; }
.signin { font-size: 14.3px; }
.avatar { width: 25px; height: 25px; margin-left: 13px; }
.win-btns { display: flex; gap: 41px; margin-left: 43px; }

/* tabs */
.tabs { flex: 0 0 41px; display: flex; align-items: flex-start; background: #fafafa; padding-left: 29px; font-size: 16.7px; }
.tab { height: 37px; line-height: 40px; margin-right: 39px; }
.tab-file { margin-right: 46px; }
.tab-on { font-weight: 600; border-bottom: 2.5px solid #117865; letter-spacing: -.1px; }
.share { margin: 5px 7px 0 auto; width: 105px; height: 30px; background: #117865; border: 0; border-radius: 3px; color: #fff; font: 14px "Open Sans", sans-serif; display: flex; align-items: center; gap: 7px; padding-left: 9px; }

/* ribbon */
.ribbon { flex: 0 0 116px; position: relative; z-index: 3; display: flex; background: #fafafa; box-shadow: 0 1px 4px rgba(0,0,0,.22); }
.group { display: flex; flex-direction: column; height: 112px; margin-top: 4px; border-right: 1px solid #d6d4d2; }
.items { flex: 1; display: grid; padding-top: 6px; align-items: start; }
.g-label { height: 18px; line-height: 20px; text-align: center; font-size: 12.3px; color: #605e5c; }
.g-clip { width: 200px; }
.g-clip .items { grid-template-columns: 69px 131px; }
.g-data { width: 449px; }
.g-data .items { grid-template-columns: 61px 59px 79px 40px 60px 61px 74px; padding-left: 5px; }
.g-query { width: 145px; }
.g-query .items { grid-template-columns: 75px 51px; padding-left: 7px; }
.g-insert { width: 183px; }
.g-insert .items { grid-template-columns: 50px 50px 61px; padding-left: 11px; }
.g-calc { width: 233px; }
.g-calc .items { grid-template-columns: 96px 54px 68px; padding-left: 8px; }
.g-sens { width: 92px; }
.g-sens .items { grid-template-columns: 92px; }
.g-share { width: 74px; }
.g-share .items { grid-template-columns: 73px; }
.g-copilot { width: 164px; }
.g-copilot .items { grid-template-columns: 103px 45px; padding-left: 4px; }
.btn { display: flex; flex-direction: column; align-items: center; font-size: 13.9px; line-height: 20px; text-align: center; white-space: nowrap; }
.btn > span { display: block; margin-top: 3px; }
.ric { width: 40px; height: 40px; }
.chev { display: inline-block; width: 9px; height: 9px; margin-left: 2px; }
.off { color: #bdbdbd; }
.clip-stack { display: flex; flex-direction: column; gap: 12px; margin-left: -3px; font-size: 14px; }
.mini { display: flex; align-items: center; gap: 4px; height: 18px; white-space: nowrap; }
.collapse { position: absolute; right: 5px; bottom: 8px; width: 12px; height: 8px; }
.ic-a { font: 26px "Open Sans", sans-serif; fill: #2a82c9; text-anchor: middle; }
.ic-fx { font: italic 20px "Liberation Serif", serif; fill: #aaa; }
.ic-dax { font: 700 8.5px "Open Sans", sans-serif; fill: #777; }
.ic-d { font: 700 9px "Open Sans", sans-serif; fill: #fff; text-anchor: middle; }

/* main */
.main { flex: 0 0 790px; display: grid; grid-template-columns: 51px 1418px 226px 225px; min-height: 0; }
.rail { background: #f3f2f1; border-right: 1px solid #e1dfdd; }
.rail-item { height: 50px; display: flex; align-items: center; justify-content: center; }
.rail-on { box-shadow: inset 3px 0 0 #117865; }

.workspace { display: grid; grid-template-columns: 1166px 252px; grid-template-rows: 746px 44px; }
.canvas { position: relative; background: #fff; overflow: hidden; }
.page-edge {
  position: absolute; left: 7px; top: -4px; width: 1153px; height: 651px;
  border: 2px dotted #555; border-top: 0;
  background-image:
    radial-gradient(circle, #555 1px, transparent 1.4px),
    radial-gradient(circle, #666 1px, transparent 1.4px),
    radial-gradient(circle, #555 1px, transparent 1.4px),
    radial-gradient(circle, #555 1px, transparent 1.4px);
  background-size: 86.3px 86.3px, 14.4px 14.4px, 14.4px 86.3px, 14.4px 86.3px;
  background-position: 41.75px 75px, 250.8px 10.4px, 639.5px 46.5px, 653.9px 46.5px;
  background-repeat: repeat, repeat-y, repeat-y, repeat-y;
}

.side-panel { position: absolute; left: 10px; top: 0; width: 251px; height: 638px; background: #e6e6e6; border: 2px solid #2f6ea5; }
.kpi { position: absolute; left: 33px; background: #fff; border: 1.5px solid #444; box-shadow: 6px 7px 8px rgba(0,0,0,.4); display: flex; flex-direction: column; justify-content: center; align-items: center; padding-top: 14px; }
.kpi-1 { top: 77px; width: 193px; height: 102px; }
.kpi-2 { top: 206px; width: 190px; height: 98px; }
.kpi-3 { top: 349px; width: 199px; height: 104px; }
.kpi-4 { top: 503px; width: 203px; height: 108px; }
.kpi-val { font: 400 46px/52px Roboto, sans-serif; color: #252423; }
.kpi-lab { font: 400 13.2px/18px Roboto, sans-serif; color: #666; margin-top: 5px; letter-spacing: .28px; white-space: nowrap; }

.banner { position: absolute; left: 268px; top: 0; width: 891px; height: 103px; background: #e6e6e6; border-top: 2px solid #2f6ea5; border-left: 2px solid #2f6ea5; border-bottom: 2px solid #7aa9d4; border-right: 1px solid #7aa9d4; display: flex; align-items: center; padding: 0 0 7px 21px; }
.banner h1 { margin: 0; font: 700 28.5px/36px "Open Sans", sans-serif; color: #252423; letter-spacing: -.1px; white-space: nowrap; }

.multi { position: absolute; left: 268px; top: 114px; width: 387px; height: 80px; background: #fff; border: 2px solid #555; border-top-color: #888; box-shadow: 6px 6px 8px rgba(0,0,0,.35); display: grid; grid-template-columns: 183px 1fr; padding: 3px 0 0 14px; }
.multi::before { content: ""; position: absolute; left: 4px; top: 4px; width: 1px; height: 47px; background: #bbb; }
.m-num { font: 700 17.3px/24px "Open Sans", sans-serif; color: #252423; }
.m-lab { font: 700 17px/25px "Open Sans", sans-serif; color: #605e5c; margin-top: 1px; white-space: nowrap; letter-spacing: -.1px; }

.visual { position: absolute; background: #fff; border: 1.5px solid #444; box-shadow: 6px 6px 8px rgba(0,0,0,.38); }
.chart { width: 100%; height: 100%; overflow: visible; }
.v-pie, .v-bar1, .v-bar2 { border: 0; outline: 1.5px solid #444; outline-offset: -1.5px; }
.v-pie { left: 273px; top: 206px; width: 381px; height: 251px; }
.v-bar1 { left: 686px; top: 114px; width: 457px; height: 246px; outline-color: #777; }
.v-bar2 { left: 686px; top: 380px; width: 457px; height: 267px; outline-color: #bbb; }
.v-table { left: 268px; top: 482px; width: 386px; height: 151px; }

.chart text { font-family: Roboto, sans-serif; }
.c-title { font-size: 14.3px; fill: #333; letter-spacing: .3px; }
.c-lab { font-size: 11px; fill: #777; }
.c-legh { font-size: 11.5px; font-weight: 700; fill: #605e5c; }
.c-leg { font-size: 11.5px; fill: #777; }
.c-tick { font-size: 11.5px; fill: #777; }
.ta-e { text-anchor: end; }
.c-ax { font-size: 12px; fill: #444; letter-spacing: .35px; }
.c-axt { font-size: 12px; font-weight: 500; fill: #444; text-anchor: middle; letter-spacing: .4px; }
.c-val text { font-size: 11px; fill: #666; text-anchor: middle; }
.c-cat text { font-size: 11px; fill: #777; text-anchor: middle; }
.c-wval text { font-size: 11px; font-weight: 500; fill: #fff; text-anchor: middle; }

.tbl { display: grid; grid-template-columns: 132px 190px; margin-left: 4.5px; font-family: Roboto, sans-serif; font-size: 15.4px; color: #444; }
.th { height: 30.5px; border-bottom: 1.5px solid #2196f3; font-size: 13.9px; line-height: 28px; font-weight: 700; color: #252423; padding-left: 5px; white-space: nowrap; margin-bottom: 2px; }
.td { height: 22.2px; line-height: 25px; font-weight: 600; padding-left: 5px; border-bottom: 1px solid #e8e8e8; }
.b { font-weight: 700; color: #1a1a1a; }
.num { text-align: right; padding-right: 4px; }
.shade { background: #ececec; }
.tf { height: 25px; line-height: 26px; font-weight: 700; border-top: 1.5px solid #72bcf5; padding-left: 5px; margin-top: 1px; }
.sort { position: absolute; left: 10px; top: 26px; border-left: 4px solid transparent; border-right: 4px solid transparent; border-bottom: 4px solid #222; }
.tdot { position: absolute; right: 5px; top: 6px; width: 7px; height: 7px; border-radius: 50%; background: #aaa; }

.actions { position: absolute; left: 1045px; top: 350px; display: flex; gap: 7px; z-index: 2; }
.act { width: 28px; height: 27px; background: #fff; border: 1px solid #eee; display: flex; align-items: center; justify-content: center; }
.dots3 { display: flex; gap: 4px; }
.dots3 i { width: 2.5px; height: 2.5px; border-radius: 50%; background: #555; }

/* filters */
.filters { background: #fff; border-left: 1px solid #c8c6c4; padding-left: 10px; }
.f-head { height: 50px; display: flex; align-items: center; margin-left: 5px; }
.pane-title { font-size: 18.4px; font-weight: 600; color: #252423; white-space: nowrap; margin-top: -2px; }
.f-head .pane-title { margin-left: 7px; }
.f-eye { width: 17px; height: 16px; margin-left: 86px; margin-top: -5px; }
.dbl { width: 16px; height: 18px; margin-left: 20px; }
.f-search { width: 225px; height: 41px; margin-top: 7px; border: 1px solid #a19f9d; border-radius: 2px; display: flex; align-items: center; gap: 10px; padding-left: 12px; font-size: 15px; }
.f-rule { height: 1px; background: #c8c6c4; margin: 6px 0 0 -10px; }
.f-row { width: 229px; height: 20px; display: flex; justify-content: space-between; align-items: center; font-size: 14.2px; color: #333; }
.f-row-1 { margin-top: 20px; }
.f-row-2 { margin-top: 33px; }
.f-row-1 + .f-box { margin-top: 12px; }
.more { letter-spacing: 1px; line-height: 10px; margin-top: -4px; padding-right: 4px; }
.f-box { width: 229px; height: 57px; margin-top: 11px; border: 1px solid #c8c6c4; border-radius: 2px; display: flex; align-items: center; justify-content: center; font-size: 14.3px; }

/* page bar */
.pagebar { grid-column: 1 / 3; background: #f3f2f1; display: flex; align-items: stretch; padding-left: 12px; }
.view-btn { width: 30px; display: flex; justify-content: center; padding-top: 5px; margin-right: 25px; position: relative; }
.view-btn .ic24 { height: 24px; }
.view-on::after { content: ""; position: absolute; left: 0; bottom: 7px; width: 30px; height: 3px; border-radius: 1px; background: #117865; }
.arr { width: 0; height: 0; border-top: 6px solid transparent; border-bottom: 6px solid transparent; margin-top: 17px; }
.arr-l { border-right: 6px solid #c8c6c4; margin-left: -5px; }
.arr-r { border-left: 6px solid #c8c6c4; margin-left: 22px; margin-right: 7.5px; }
.page-tab { width: 97px; background: #fff; display: flex; align-items: center; justify-content: center; font-size: 14.3px; padding-bottom: 2px; }
.page-on { font-weight: 600; border-bottom: 5px solid #117865; width: 97px; padding-bottom: 0; padding-top: 4px; }
.page-add { width: 50px; background: #117865; color: #fff; font-size: 26px; font-weight: 700; display: flex; align-items: center; justify-content: center; line-height: 1; padding-bottom: 3px; }

/* visualizations */
.vis { background: #f3f2f1; border-left: 1px solid #d6d4d2; border-right: 1px solid #d6d4d2; }
.pane-head { height: 50px; display: flex; align-items: center; justify-content: space-between; padding: 0 11px 0 9px; }
.pane-head .dbl { margin: 0; }
.build { height: 20px; line-height: 20px; font-size: 14px; font-weight: 600; padding-left: 9px; margin-top: -2px; }
.build-tabs { display: flex; align-items: center; height: 40px; margin-top: 4px; padding-left: 9px; }
.build-on { width: 40px; height: 40px; background: #d2d0ce; display: flex; align-items: center; justify-content: center; }
.fmt { width: 32px; height: 32px; margin-left: 46px; }
.notch { width: 226px; height: 11px; margin-top: 5px; }
.vgrid { display: grid; grid-template-columns: repeat(6, 35px); grid-auto-rows: 35px; margin: 9px 0 0 8px; justify-items: center; align-items: center; }
.vgrid > svg { width: 23px; height: 23px; }
.vgrid .k { fill: none; stroke: #444; stroke-width: 1.5; }
.vgrid .w { fill: #fff; stroke: #444; stroke-width: 1.3; }
.vgrid .w0 { fill: #f3f2f1; stroke: none; }
.vgrid .w0b { fill: #f3f2f1; stroke: #1f6fb5; stroke-width: 1.3; }
.vgrid .g0 { fill: #bbb; stroke: #999; stroke-width: .8; }
.vgrid .w1 { fill: #fff; stroke: #999; stroke-width: 1.3; }
.vgrid .w2 { fill: #fff; stroke: #1f6fb5; stroke-width: 2; }
.vgrid .a { fill: #79b6ea; stroke: #1f6fb5; stroke-width: 1.3; }
.vgrid .g { fill: #bbb; stroke: #888; stroke-width: 1; }
.vgrid .l { fill: none; stroke: #1f6fb5; stroke-width: 1.5; }
.vgrid .o { fill: #f0a24a; stroke: #c85f00; stroke-width: .8; }
.vgrid .d1 { fill: #555; stroke: #444; stroke-width: .8; }
.vgrid .d2 { fill: #444; }
.vgrid .g1 { fill: none; stroke: #999; stroke-width: 1.5; }
.vgrid .gr { fill: #3d9a4f; }
.vgrid .gf { fill: #3da35a; }
.vgrid .rf { fill: #e0444e; }
.vgrid .wf { fill: #fff; stroke: #444; stroke-width: 1.3; }
.vgrid .t { fill: none; stroke: #777; stroke-width: 1; }
.vgrid .az { fill: #3a9bd1; }
.vgrid .ob { fill: #f7a21b; stroke: #c85f00; stroke-width: .7; }
.vgrid .or { fill: #d96a0c; }
.vgrid .wt { fill: #f3f2f1; stroke: #1f6fb5; stroke-width: 1; }
.vgrid .pa { fill: none; stroke: #9a46a8; stroke-width: 1.5; }
.vt { font-weight: 700; color: #1f7ab8; line-height: 1; font-family: "Open Sans", sans-serif; }
.vt-r { font-size: 20px; }
.vt-py { font-size: 21px; letter-spacing: -.5px; }
.vt-box { width: 23px; height: 20px; border: 1.5px solid #555; border-bottom-width: 2.5px; background: #fff; display: flex; align-items: center; justify-content: center; color: #4a9bd9; font: 400 12px/1 Roboto, sans-serif; position: relative; }
.vt-q svg { position: absolute; left: -2px; top: -5px; width: 11px; height: 15px; }
.v-more { padding-left: 16px; height: 16px; line-height: 8px; font-size: 15px; letter-spacing: 2.5px; font-weight: 700; margin-top: 5px; }
.v-sec { border-top: 1px solid #e1dfdd; margin-top: 17px; padding: 13px 0 0 4px; font-size: 14.1px; color: #333; }
.v-lab { height: 18px; line-height: 18px; padding-left: 10px; }
.dash { width: 213px; background: #fff; border: 1px dashed #c8c6c4; display: flex; align-items: center; white-space: nowrap; }
.dash-1 { height: 34px; margin-top: 7px; padding-left: 13px; }
.dash-2 { height: 31px; margin-top: 14px; padding-left: 10px; }
.v-h { height: 20px; line-height: 20px; margin-top: 15px; padding-left: 10px; font-weight: 600; color: #444; }
.v-tg { width: 183px; height: 20px; margin: 11px 0 0 10px; display: flex; justify-content: space-between; align-items: center; font-size: 14px; }
.v-tg + .v-tg { margin-top: 14px; }
.toggle { width: 40px; height: 20px; border-radius: 10px; display: flex; align-items: center; justify-content: space-between; padding: 0 3px; font-size: 10.5px; }
.toggle i { width: 10px; height: 10px; border-radius: 50%; }
.toggle b { font-weight: 400; }
.off-t { background: #fff; border: 1px solid #777; color: #555; }
.off-t i { background: #605e5c; }
.on-t { background: #117865; color: #fff; padding-left: 6px; }
.on-t i { background: #fff; }

/* data */
.data { background: #f3f2f1; padding-left: 5px; }
.data .pane-head { padding: 0 11px 0 6px; }
.d-search { width: 215px; height: 29px; margin-top: 7px; background: #fff; border: 1px solid #e1dfdd; border-bottom: 1.5px solid #666; border-radius: 3px; display: flex; align-items: center; gap: 9px; padding-left: 13px; font-size: 15.8px; color: #777; }
.d-search span { margin-top: 3px; }
.tree { display: flex; align-items: center; height: 20px; margin: 17px 0 0 12px; font-size: 14px; gap: 6px; }
.tree span { margin-left: 2px; }

/* status */
.status { flex: 0 0 30px; display: flex; align-items: center; justify-content: space-between; background: #f3f2f1; border-top: 1px solid #e1dfdd; border-bottom: 1px solid #222; padding: 2px 5px 0 5px; font-size: 14.4px; color: #605e5c; }
.status-r { display: flex; align-items: center; }
.z-minus { font-size: 16px; font-weight: 700; }
.slider { position: relative; width: 124px; height: 1px; background: #605e5c; margin-left: 6px; }
.s-thumb { position: absolute; left: 40px; top: -7px; width: 5px; height: 14px; background: #605e5c; }
.s-tick { position: absolute; left: 62px; top: -3px; width: 1px; height: 7px; background: #605e5c; }
.z-plus { font-size: 18px; margin-left: 6px; }
.z-pct { margin-left: 16px; }
.fit { width: 20px; height: 18px; margin-left: 24px; }
.update { margin-left: 18px; color: #555; }

/* taskbar */
.taskbar { flex: 0 0 60px; display: flex; align-items: center; background: linear-gradient(90deg, #e2dce2 0%, #ecdbd7 60%, #eed9d4 100%); padding-left: 26px; position: relative; }
.win { width: 29px; height: 29px; }
.t-search { width: 273px; height: 38px; margin-left: 18px; border-radius: 19px; background: #f5f1f1; box-shadow: 0 1px 1px rgba(0,0,0,.12); display: flex; align-items: center; padding-left: 13px; gap: 11px; color: #555; font-size: 16px; }
.bat { width: 34px; height: 34px; margin-left: auto; margin-right: 12px; }
.t-icons { display: flex; margin-left: 3px; }
.t-ic { width: 55px; height: 60px; display: flex; align-items: center; justify-content: center; position: relative; }
.t-dot::after { content: ""; position: absolute; left: 50%; bottom: 6px; width: 8px; height: 4px; margin-left: -4px; border-radius: 2px; background: #7a7a7a; }
.t-active { width: 48px; height: 48px; margin-left: 4px; background: #f8eeec; border-radius: 5px; box-shadow: 0 1px 1px rgba(0,0,0,.08); }
.t-active::after { content: ""; position: absolute; left: 15px; bottom: 1px; width: 18px; height: 3px; border-radius: 2px; background: #0078d4; }
.tray { margin-left: auto; display: flex; align-items: center; font-size: 14.5px; color: #252423; }
.weather { width: 32px; height: 26px; }
.weather-txt { margin-left: 9px; line-height: 20px; }
.w-sub { color: #666; }
.tray-up { width: 14px; height: 8px; margin-left: 70px; }
.lang { width: 60px; margin-left: 11px; text-align: center; line-height: 20px; margin-right: 6px; }
.tray .ic20 { margin-right: 10px; }
.clock { margin: 0 25px 0 0; text-align: right; line-height: 20px; width: 88px; }
```
